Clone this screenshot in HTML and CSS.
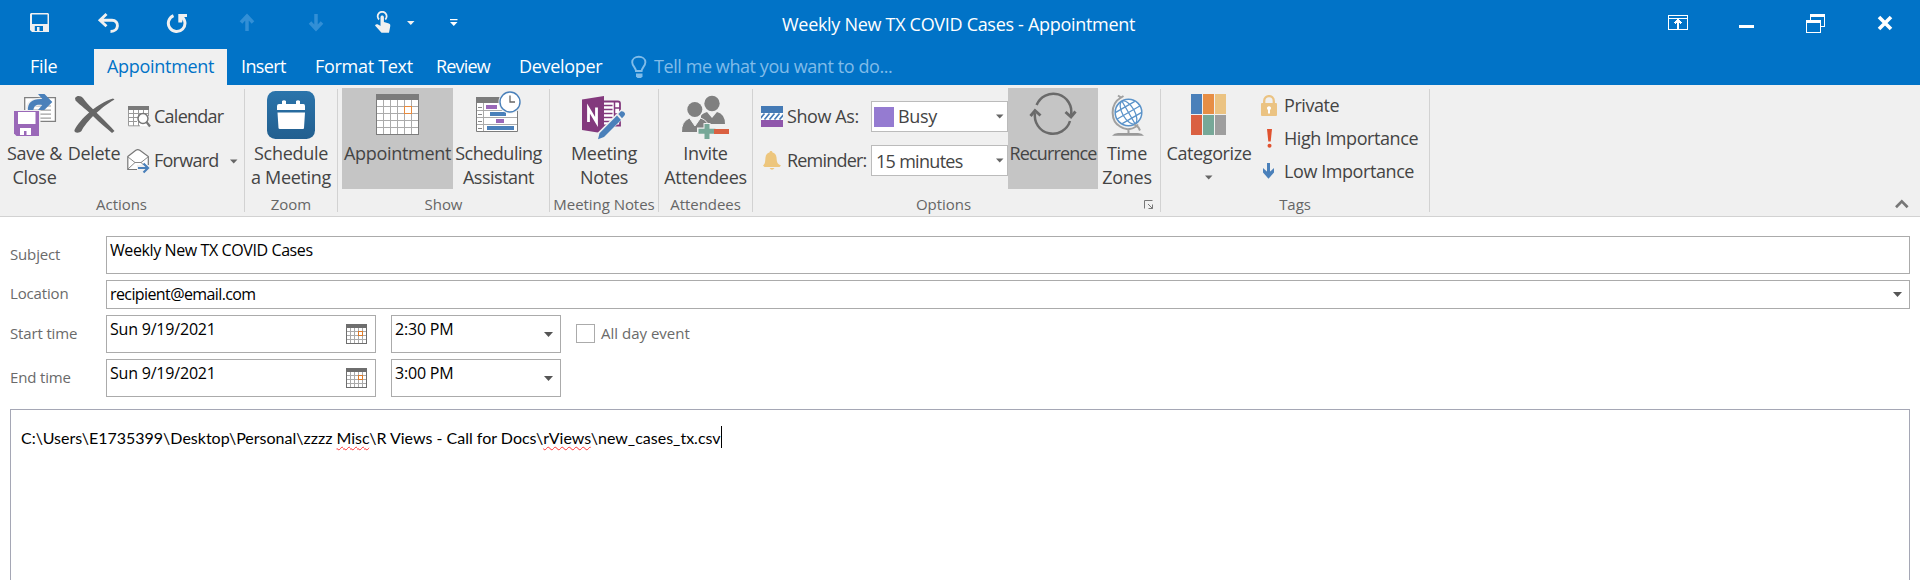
FILE: index.html
```html
<!DOCTYPE html>
<html lang="en">
<head>
<meta charset="utf-8">
<title>Weekly New TX COVID Cases - Appointment</title>
<link rel="stylesheet" href="styles.css">
</head>
<body>
<header class="titlebar">
  <div class="quick">
    <span class="quick-cell"><svg width="21" height="23" viewBox="29 11 21 23"><path fill="#f0f0f0" fill-rule="evenodd" d="M31 13h17l1 1v18H32l-2-2V14zM32 14.500V24h15.500V14.500zM34.800 26v5h8.200v-5zM37 27h2.500v4H37z"/></svg></span>
    <span class="quick-cell"><svg width="23" height="23" viewBox="97 11 23 23"><path fill="none" stroke="#f0f0f0" stroke-width="2.900" d="M106.500 14l-6.500 6.300l6.500 6M100.500 20.300h11.500c7.500 0 7.500 11.200-1.500 11.200"/></svg></span>
    <span class="quick-cell"><svg width="23" height="23" viewBox="167 11 23 23"><path fill="none" stroke="#f0f0f0" stroke-width="3" d="M174.500 15.600a8.300 8.300 0 1 0 7.500.6"/><path fill="#f0f0f0" d="M179.300 14h8.700v3h-3.500l-1.500 5.500h-3.700z"/></svg></span>
    <span class="quick-cell"><svg width="16" height="23" viewBox="239 11 16 23"><path fill="none" stroke="#328fd6" stroke-width="3.500" d="M247 31V15M241 22.500l6-6.500l6 6.500"/></svg></span>
    <span class="quick-cell"><svg width="16" height="23" viewBox="308 11 16 23"><path fill="none" stroke="#328fd6" stroke-width="3.500" d="M316 14v16M310 22.500l6 6.500l6-6.500"/></svg></span>
    <span class="touch-cell"><svg width="42" height="23" viewBox="374 11 42 23"><path fill="none" stroke="#f0f0f0" stroke-width="1.800" d="M379 19.500a4.500 4.500 0 1 1 6.300 0"/><path fill="#f0f0f0" d="M380.500 17.200c0-2.300 3.400-2.300 3.400 0V22l5 1.600c1.300.5 1.600 1.500 1.300 2.900L389 32.800h-7.500L375 25.500c1-1.800 2.800-1.500 5.500.5zM407 21h7.500l-3.700 4z"/></svg></span>
    <span class="more-cell"><svg width="8" height="23" viewBox="450 11 8 23"><path fill="#fff" d="M450 19h7.500v1.200H450zM450 22h7.500l-3.700 4z"/></svg></span>
  </div>
  <div class="window-title">Weekly New TX COVID Cases - Appointment</div>
  <div class="window-buttons">
    <span><svg width="20" height="20" viewBox="1668 13 20 20" shape-rendering="crispEdges"><path fill="none" stroke="#fff" d="M1668.500 15.500h19v14h-19zM1668.500 18.500h19"/><path fill="none" stroke="#fff" stroke-width="2" d="M1678 29v-9M1674.500 23.500l3.500-3.500l3.500 3.500"/></svg></span>
    <span><svg width="15" height="20" viewBox="1739 13 15 20"><path fill="#fff" d="M1739 25h15v3h-15z"/></svg></span>
    <span><svg width="19" height="20" viewBox="1806 13 19 20" shape-rendering="crispEdges"><path fill="none" stroke="#fff" d="M1806.500 21.500h14v11h-14zM1810.500 20v-5.500h14v12H1821"/><path fill="#fff" d="M1806 20h15v3h-15zM1810 14h15v3h-15z"/></svg></span>
    <span><svg width="16" height="20" viewBox="1877 13 16 20"><path fill="none" stroke="#fff" stroke-width="3.600" d="M1879 17l12 12M1891 17l-12 12"/></svg></span>
  </div>
</header>

<nav class="tabs">
  <a class="tab tab-file">File</a>
  <a class="tab tab-active">Appointment</a>
  <a class="tab tab-insert">Insert</a>
  <a class="tab tab-format">Format Text</a>
  <a class="tab tab-review">Review</a>
  <a class="tab tab-developer">Developer</a>
  <span class="tell">
    <svg width="16" height="24" viewBox="631 55 16 24"><path fill="none" stroke="#80bce9" stroke-width="1.900" d="M636 71c0-3-3.800-5-3.800-8.800c0-7.200 13.200-7.200 13.200 0c0 3.800-3.800 5.800-3.800 8.800z"/><path fill="#80bce9" d="M636 73.500h6.500v3l-1.500 1.500h-3.500l-1.500-1.500z"/></svg>
    Tell me what you want to do...
  </span>
</nav>

<section class="ribbon">
  <div class="group g-actions">
    <div class="items">
      <div class="big save">
        <svg width="46" height="53" viewBox="11 88 46 53"><path fill="#fff" stroke="#808080" stroke-width="1.300" d="M23.700 97.700h30.700v23.600H23.700z"/><path stroke="#a0a0a0" stroke-width="1.200" d="M28 106h22M28 110.200h22M28 114.200h22M28 118.200h22"/><path fill="#f0f0f0" d="M12 110h27.500v28H12z"/><path fill="#9a68b8" d="M13 111h25v25H15.500L13 133.500z"/><path fill="#fff" d="M17 112h17.500v12H17zM19 128h11v7h-4.500v-4h-2.500v4H19z"/><path fill="none" stroke="#f0f0f0" stroke-width="8" d="M29 109c0-6 5-7.500 14-7.500"/><path fill="#4a80ba" d="M26.800 110c0-7 4-11.500 14.500-11L37 94h6.500l7.800 8l-8 8H37l4.300-5c-6-1-8 .5-9 5z"/></svg>
        <span>Save &amp;<br>Close</span>
      </div>
      <div class="big delete">
        <svg width="46" height="53" viewBox="71 88 46 53"><path fill="#666" d="M75 98c2-3 6-2.500 8 0c6 8 13 14 17.500 18.500c5 5 10 10 14 14.500l-2.500 2C106 128 99 122 94 117C88 111 80 105 75.500 100.500z"/><path fill="#666" d="M114.500 99.500C101 107 86 122 81.500 131c-3 3-8 1.500-7-1C80 119 97 103.500 113 98.500z"/></svg>
        <span>Delete</span>
      </div>
      <div class="stack actions-stack">
        <div class="small"><svg width="24" height="24" viewBox="127 105 24 24"><path fill="#fff" d="M128 107h21v19h-21z"/><path fill="none" stroke="#9a9a9a" d="M128.500 106.500v19.300H140M148.500 106v10M133.500 110v16M138.500 110v16M143.500 110v4M128 113.500h20M128 117.500h10M128 121.500h9"/><path fill="#7a7a7a" d="M128 106h21v4h-21z"/><circle cx="143" cy="118.500" r="5" fill="#fff" stroke="#777" stroke-width="1.500"/><path stroke="#777" stroke-width="2.200" d="M146.500 122l3.500 4.500"/></svg><span>Calendar</span></div>
        <div class="small"><svg width="24" height="26" viewBox="127 148 24 26"><path fill="#fff" stroke="#777" stroke-width="1.200" d="M127.800 156.500l8-6.300q2-1.200 4 0l8.500 6.300v13h-20.500z"/><path fill="none" stroke="#888" d="M128 157l7 5.500h6l7-5.500M128 169l7-6.500M148 169l-7-6.500"/><path stroke="#f0f0f0" stroke-width="6" d="M137 168h13"/><path fill="none" stroke="#4a80ba" stroke-width="2.200" d="M138 168h10M143.500 163.500l4.500 4.500l-4.500 4.500"/></svg><span>Forward</span><svg class="fwd-arrow" width="8" height="5" viewBox="0 0 8 5"><path fill="#666" d="M0 .5h7.500L3.700 4.500z"/></svg></div>
      </div>
    </div>
    <div class="caption">Actions</div>
  </div>

  <div class="group g-zoom">
    <div class="items">
      <div class="big fill">
        <svg width="48" height="53" viewBox="267 88 48 53"><defs><linearGradient id="zoomBlue" x1="0" y1="0" x2="0" y2="1"><stop offset="0" stop-color="#2b74ab"/><stop offset="1" stop-color="#225f8f"/></linearGradient></defs><rect x="267" y="91" width="48" height="48" rx="8.500" fill="url(#zoomBlue)"/><path fill="#fff" d="M277 110v-4q0-2 2-2h3v-3q2-1.500 4 0v3h10v-3q2-1.500 4 0v3h3.500q1.500 0 1.500 2v4zM277.500 112.500H305L304 128q0 1-1 1h-23q-1.500 0-1.500-1z"/></svg>
        <span>Schedule<br>a Meeting</span>
      </div>
    </div>
    <div class="caption">Zoom</div>
  </div>

  <div class="group g-show">
    <div class="items">
      <div class="big pressed appt">
        <svg width="45" height="53" viewBox="374 88 45 53" shape-rendering="crispEdges"><path fill="#fff" d="M375 94h43v41h-43z"/><path fill="none" stroke="#ababab" d="M382.500 99v35M389.500 99v35M396.500 99v35M403.500 99v35M410.500 99v35M376 106.500h41M376 113.500h41M376 120.500h41M376 127.500h41"/><path fill="none" stroke="#7c7c7c" d="M375.500 94.500h42v40h-42z"/><path fill="#7c7c7c" d="M375 94h43v6h-43z"/><path fill="#fff" stroke="#e88a3c" d="M403.500 106.500h7v7h-7z"/></svg>
        <span>Appointment</span>
      </div>
      <div class="big sched">
        <svg width="47" height="53" viewBox="476 88 47 53"><path fill="#fff" stroke="#7c7c7c" d="M477.500 97.500h41v34h-41z"/><path fill="#7c7c7c" d="M477 97h30v6h-30z"/><path fill="none" stroke="#aaa" d="M484.500 103v28M478 110.500h40M478 117.500h40M478 124.500h40"/><path stroke="#888" d="M479 107.500h4M479 114.500h4M479 121.500h4M479 128.500h4"/><path fill="#9a68b8" d="M487 105h11v4h-11zM497 119h8v4h-8z"/><path fill="#4a80ba" d="M491 112h16v4h-16zM488 126h27v4h-27z"/><circle cx="511" cy="102" r="11.500" fill="#f0f0f0"/><circle cx="511" cy="102" r="10" fill="#fff" stroke="#4a80ba" stroke-width="1.400"/><path fill="none" stroke="#666" stroke-width="1.300" d="M511 95.500v6.500h5"/></svg>
        <span>Scheduling<br>Assistant</span>
      </div>
    </div>
    <div class="caption">Show</div>
  </div>

  <div class="group g-notes">
    <div class="items">
      <div class="big fill">
        <svg width="46" height="53" viewBox="584 88 46 53"><path fill="#fff" stroke="#83397d" stroke-width="1.800" d="M606 101.500h15q2 0 2 2v22H606z"/><path fill="none" stroke="#83397d" stroke-width="1.500" d="M607 105.500h8.500M607 109.500h8.500M607 113.500h8.500M607 117.500h8.500M607 121.500h8.500M617.500 101.500v24M618 108h5M618 114h5"/><path fill="#83397d" d="M585 99.500l22-3.500v37.500l-22-3.500z"/><path fill="none" stroke="#fff" stroke-width="2.800" d="M591.500 122v-13.500l8 13.500v-14.500"/><path stroke="#f0f0f0" stroke-width="8" d="M600 139l28-28"/><path fill="#4a80ba" d="M601 139.200l1.500-6L620 115.500l4 4.500l-17 17zM621.300 114l2.700-2.700q1.500-.5 2.600.5l1.200 1.300q.7 1.200-.3 2.500l-2.500 2.700z"/></svg>
        <span>Meeting<br>Notes</span>
      </div>
    </div>
    <div class="caption">Meeting Notes</div>
  </div>

  <div class="group g-attendees">
    <div class="items">
      <div class="big fill">
        <svg width="48" height="53" viewBox="682 88 48 53"><circle cx="712" cy="103.500" r="7.700" fill="#808080"/><path fill="#808080" d="M701 124V115q4-2.500 6-3l5 6l5-6q8 2 8 12z"/><circle cx="694.800" cy="109.500" r="8.800" fill="#f0f0f0"/><circle cx="694.800" cy="109.500" r="7.500" fill="#808080"/><path fill="#808080" stroke="#f0f0f0" d="M681.500 132.500q-.5-11 8-14.500l5.500 8l5.500-8q9 2.500 9 14.500z"/><path fill="#f0f0f0" d="M697 127.500h6.500v-4.500h7v4.500H730V136h-18.500v4h-8v-5H697z"/><path fill="#77a898" d="M698.500 128.700h6v-4.700h5v4.700h6v5h-6v5.300h-5v-5.300h-6z"/><path fill="#da6041" d="M714 129h15v5h-15z"/></svg>
        <span>Invite<br>Attendees</span>
      </div>
    </div>
    <div class="caption">Attendees</div>
  </div>

  <div class="group g-options">
    <div class="items">
      <div class="stack options-stack">
        <div class="field-row">
          <svg width="22" height="22" viewBox="761 105 22 22"><path fill="#fff" d="M761 105h22v21h-22z"/><path fill="#447ab5" d="M761 105h22v7h-22z"/><path fill="#8f56ab" d="M761 119h22v7h-22z"/><path stroke="#447ab5" stroke-width="1.700" d="M759.500 118.500l5-6M764.500 118.500l5-6M769.500 118.500l5-6M774.500 118.500l5-6M779.500 118.500l5-6"/></svg>
          <span class="field-name">Show As:</span>
          <span class="select"><i class="swatch"></i><span class="busy">Busy</span><svg width="8" height="5" viewBox="0 0 8 5"><path fill="#666" d="M0 .5h7.500L3.700 4.500z"/></svg></span>
        </div>
        <div class="field-row">
          <svg width="22" height="22" viewBox="761 149 22 22"><path fill="#edc67d" d="M763 164.500c2.500-2 2-4 2.500-8c.3-3 2-4.500 4-5c0-2 3-2 3 0c2 .5 3.700 2 4 5c.5 4 0 6 4.500 8l-1.500 1.500h-15zM769.500 167h5q-2.500 3.500-5 0z"/></svg>
          <span class="field-name reminder">Reminder:</span>
          <span class="select"><span class="minutes">15 minutes</span><svg width="8" height="5" viewBox="0 0 8 5"><path fill="#666" d="M0 .5h7.500L3.700 4.500z"/></svg></span>
        </div>
      </div>
      <div class="big pressed recur">
        <svg width="48" height="53" viewBox="1029 88 48 53"><path fill="none" stroke="#6a6a6a" stroke-width="2.500" d="M1036.600 105A18 18 0 0 1 1071 115M1070 121A18 18 0 0 1 1035 113"/><path fill="none" stroke="#6a6a6a" stroke-width="2.900" d="M1065.500 112l5.500 5l4.500-5.500M1030.500 116l4.500-5.500l5.500 5"/></svg>
        <span>Recurrence</span>
      </div>
      <div class="big zones">
        <svg width="36" height="53" viewBox="1109 88 36 53"><circle cx="1128.500" cy="112.500" r="13.300" fill="#fff" stroke="#5b93c9" stroke-width="1.500"/><g fill="none" stroke="#5b93c9" stroke-width="1.300" transform="rotate(-30 1128.500 112.500)"><ellipse cx="1128.500" cy="112.500" rx="6" ry="13"/><path d="M1128.500 99.500v26M1115.500 112.500h26M1117.500 106h22M1117.500 119h22"/></g><path fill="none" stroke="#a0a0a0" stroke-width="2" d="M1121 97.500c-12 7-10 24-1 29c6 4.500 14 3 18-2M1118 95.500l3 2l2.500-1.500M1134.500 124.500l4 3l1.500 3M1128.500 129v4"/><path fill="#999" d="M1112 135.700q2-2.700 6-2.700h20q4 0 6 2.700z"/></svg>
        <span>Time<br>Zones</span>
      </div>
    </div>
    <div class="caption">Options<svg class="launcher" width="10" height="10" viewBox="0 0 10 10"><path fill="none" stroke="#777" d="M.5 8.500v-8h8M4 4l4.500 4.500M8.500 4.500v4h-4"/></svg></div>
  </div>

  <div class="group g-tags">
    <div class="items">
      <div class="big categ">
        <svg width="36" height="53" viewBox="1191 88 36 53"><path fill="#4a80ba" d="M1191 94h11v20h-11z"/><path fill="#e78e45" d="M1203 94h11v20h-11z"/><path fill="#ebc382" d="M1215 94h11v20h-11z"/><path fill="#da6041" d="M1191 115h11v20h-11z"/><path fill="#77a898" d="M1203 115h11v20h-11z"/><path fill="#9e9e9e" d="M1215 115h11v20h-11z"/></svg>
        <span>Categorize</span>
        <svg class="cat-arrow" width="8" height="5" viewBox="0 0 8 5"><path fill="#666" d="M0 .5h7.500L3.700 4.500z"/></svg>
      </div>
      <div class="stack tags-stack">
        <div class="small"><svg width="16" height="22" viewBox="1261 94 16 22"><path fill="none" stroke="#ebc382" stroke-width="2.300" d="M1264.200 103v-3c0-6.500 9.600-6.500 9.600 0v3"/><rect x="1261" y="102" width="16" height="13" rx="1" fill="#ebc382"/><path fill="#fff" d="M1267 106.500q2-2.500 4 0q.3 1.500-1 2.500v3.500h-2V109q-1.300-1-1-2.500z"/></svg><span>Private</span></div>
        <div class="small"><svg width="16" height="22" viewBox="1261 128 16 22"><path fill="#e0522f" d="M1267 129h5l-1.300 12.500h-2.400z"/><circle cx="1269.500" cy="145.700" r="2" fill="#e0522f"/></svg><span>High Importance</span></div>
        <div class="small"><svg width="16" height="22" viewBox="1261 161 16 22"><path fill="none" stroke="#4a80ba" stroke-width="3" d="M1268.500 163v14"/><path fill="#4a80ba" d="M1263 168l5.500 5l5.500-5v4.500l-5.500 6.200l-5.500-6.200z"/></svg><span>Low Importance</span></div>
      </div>
    </div>
    <div class="caption">Tags</div>
  </div>
  <svg class="collapse" width="14" height="10" viewBox="0 0 14 10"><path fill="none" stroke="#777" stroke-width="2.700" d="M1 8.200l5.800-5.800l5.800 5.800"/></svg>
</section>

<main class="form">
  <div class="row row-subject"><label>Subject</label><div class="box grow">Weekly New TX COVID Cases</div></div>
  <div class="row row-location"><label>Location</label><div class="box grow">recipient@email.com<svg class="loc-arrow" width="10" height="5" viewBox="0 0 10 5"><path fill="#555" d="M0 0h9L4.500 5z"/></svg></div></div>
  <div class="row row-time">
    <label>Start time</label>
    <div class="box date">Sun 9/19/2021<svg class="cal" width="21" height="20" viewBox="0 0 21 20" shape-rendering="crispEdges"><path fill="none" stroke="#aaa" d="M4.500 4v15M8.500 4v15M12.500 4v15M16.500 4v15M1 7.500h19M1 11.500h19M1 15.500h19"/><path fill="none" stroke="#6e6e6e" d="M.5.500h20v19H.5z"/><path fill="#6e6e6e" d="M0 0h21v4H0z"/><path fill="#fff" stroke="#dd7a28" d="M12.500 7.500h4v4h-4z"/></svg></div>
    <div class="box time">2:30 PM<svg width="9" height="5" viewBox="0 0 9 5"><path fill="#555" d="M0 0h9L4.500 5z"/></svg></div>
    <i class="check"></i><span class="allday">All day event</span>
  </div>
  <div class="row row-time">
    <label>End time</label>
    <div class="box date">Sun 9/19/2021<svg class="cal" width="21" height="20" viewBox="0 0 21 20" shape-rendering="crispEdges"><path fill="none" stroke="#aaa" d="M4.500 4v15M8.500 4v15M12.500 4v15M16.500 4v15M1 7.500h19M1 11.500h19M1 15.500h19"/><path fill="none" stroke="#6e6e6e" d="M.5.500h20v19H.5z"/><path fill="#6e6e6e" d="M0 0h21v4H0z"/><path fill="#fff" stroke="#dd7a28" d="M12.500 7.500h4v4h-4z"/></svg></div>
    <div class="box time">3:00 PM<svg width="9" height="5" viewBox="0 0 9 5"><path fill="#555" d="M0 0h9L4.500 5z"/></svg></div>
  </div>
  <div class="editor"><p>C:\Users\E1735399\Desktop\Personal\zzzz <u>Misc</u>\R Views - Call for Docs\<u>rViews</u>\new_cases_tx.csv</p><i class="caret"></i></div>
</main>
</body>
</html>
```

FILE: styles.css
```css
* { box-sizing: border-box; }
body {
  margin: 0;
  height: 580px;
  overflow: hidden;
  display: flex;
  flex-direction: column;
  background: #fff;
  color: #444;
  font: 18px/24px "Open Sans", "Noto Sans", sans-serif;
  letter-spacing: -0.3px;
  white-space: nowrap;
}
svg { display: block; flex: none; }

/* Title bar */
.titlebar {
  flex: 0 0 49px;
  display: flex;
  background: #0173c7;
  color: #fff;
}
.quick { flex: 0 0 782px; display: flex; padding: 11px 0 0 5px; }
.quick-cell { width: 69px; display: flex; justify-content: center; }
.touch-cell { width: 100px; padding-left: 24px; }
.window-title { padding-top: 12px; letter-spacing: -0.3px; }
.window-buttons { display: flex; margin: 0 1px 0 auto; padding-top: 13px; }
.window-buttons span { width: 69px; display: flex; justify-content: center; }

/* Tabs */
.tabs { flex: 0 0 36px; display: flex; background: #0173c7; color: #fff; }
.tab { padding: 5px 0 0 15px; }
.tab-file { width: 94px; padding-left: 30px; }
.tab-active { width: 133px; padding-left: 13px; background: #f0f0f0; color: #0173c7; }
.tab-insert { width: 73px; padding-left: 14px; letter-spacing: -0.6px; }
.tab-format { width: 121px; }
.tab-review { width: 83px; letter-spacing: -0.8px; }
.tab-developer { width: 112px; }
.tell {
  display: flex;
  gap: 7px;
  padding: 6px 0 0 15px;
  line-height: 22px;
  letter-spacing: -0.42px;
  color: #80bce9;
}

/* Ribbon */
.ribbon {
  flex: 0 0 132px;
  display: flex;
  padding-top: 4px;
  background: #f0f0f0;
  border-bottom: 1px solid #d2d2d2;
}
.group { height: 123px; border-right: 1px solid #d2d2d2; }
.g-actions { width: 245px; padding-left: 5px; }
.g-zoom { width: 93px; }
.g-show { width: 212px; padding-left: 4px; }
.g-notes { width: 109px; }
.g-attendees { width: 94px; }
.g-options { width: 408px; padding-left: 8px; }
.g-tags { width: 269px; }
.items { display: flex; height: 101px; margin-top: -1px; }
.big {
  display: flex;
  flex-direction: column;
  align-items: center;
  text-align: center;
}
.save { width: 59px; }
.delete { width: 60px; }
.fill { width: 100%; }
.appt { width: 111px; }
.sched { width: 91px; letter-spacing: -0.5px; }
.recur { width: 90px; letter-spacing: -0.85px; }
.zones { width: 58px; }
.categ { width: 96px; letter-spacing: -0.4px; }
.cat-arrow { margin-top: 10px; }
.pressed { background: #c5c5c5; }
.stack { display: flex; flex-direction: column; }
.small { display: flex; align-items: center; }
.small span { margin-top: -2px; }
.actions-stack { padding: 7px 0 0 3px; letter-spacing: -0.75px; }
.actions-stack .small { height: 44px; gap: 3px; }
.fwd-arrow { margin-left: 8px; }
.tags-stack { padding: 1px 0 0 4px; letter-spacing: -0.42px; }
.tags-stack .small { height: 33px; gap: 7px; }
.options-stack { width: 247px; padding-top: 7px; }
.field-row { display: flex; align-items: center; height: 44px; }
.field-name { flex: 1; margin-top: -2px; padding-left: 4px; letter-spacing: -0.4px; }
.reminder { letter-spacing: -0.8px; }
.select {
  width: 137px;
  height: 31px;
  display: flex;
  align-items: center;
  margin-top: -1px;
  padding: 0 3px 0 2px;
  background: #fff;
  border: 1px solid #bbb;
}
.select svg { margin-left: auto; }
.swatch { width: 20px; height: 20px; margin-right: 4px; background: #957bd1; }
.busy { margin-top: -1px; }
.minutes { padding-left: 2px; letter-spacing: -0.7px; }
.caption {
  position: relative;
  padding-top: 4px;
  font-size: 15px;
  line-height: 22px;
  letter-spacing: -0.05px;
  text-align: center;
  color: #666;
}
.g-actions .caption { padding-right: 6px; }
.g-show .caption { padding-right: 4px; }
.g-options .caption { padding-right: 34px; }
.launcher { position: absolute; right: 6px; top: 11px; }
.collapse { margin: 110px 11px 0 auto; }

/* Form */
.form {
  flex: 1;
  display: flex;
  flex-direction: column;
  padding: 19px 10px 0;
  font-size: 16px;
  letter-spacing: -0.2px;
  color: #000;
}
.row { display: flex; margin-bottom: 6px; }
.row label { width: 96px; font-size: 15px; letter-spacing: -0.15px; color: #6a6a6a; }
.box { height: 38px; display: flex; padding: 1px 3px 0; border: 1px solid #ababab; }
.box svg { margin-left: auto; }
.grow { flex: 1; }
.row-subject label { padding-top: 6px; }
.row-subject .box { letter-spacing: -0.4px; }
.row-location label { padding-top: 1px; }
.row-location .box { height: 29px; letter-spacing: -0.6px; }
.box .loc-arrow { margin: 10px 3px 0 auto; }
.row-time label { padding-top: 6px; }
.date { width: 270px; margin-right: 15px; }
.date .cal { margin: 7px 5px 0 auto; }
.time { width: 170px; }
.time svg { margin: 15px 4px 0 auto; }
.check { width: 19px; height: 19px; margin: 9px 6px 0 15px; border: 1px solid #ababab; }
.allday { padding-top: 6px; font-size: 15px; letter-spacing: 0; color: #6a6a6a; }
.editor {
  flex: 1;
  display: flex;
  margin-top: 6px;
  padding: 16px 10px 0;
  border: 1px solid #a5a7b5;
  border-bottom: 0;
  font-family: Lato, "Open Sans", sans-serif;
  letter-spacing: 0;
}
.editor p { margin: 0; }
.editor u { text-decoration: underline wavy #f33 1px; text-underline-offset: 2px; text-decoration-skip-ink: none; }
.caret { width: 1px; height: 22px; background: #000; }
```
